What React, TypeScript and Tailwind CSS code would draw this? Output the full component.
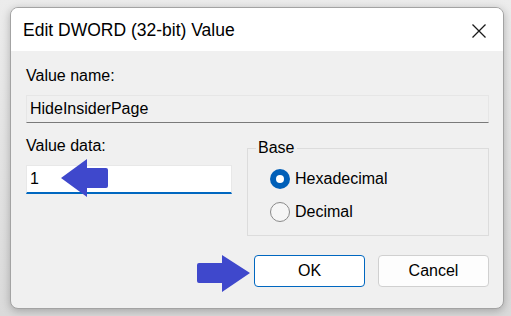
import React from "react";

function LeftArrow() {
  return (
    <svg width="50" height="40" viewBox="0 0 50 40" className="absolute left-[60px] top-[158px]">
      <path d="M1 20 L27 1 L27 10 L46 10 Q48 10 48 12 L48 28 Q48 30 46 30 L27 30 L27 39 Z" fill="#3f48cc" />
    </svg>
  );
}

function RightArrow() {
  return (
    <svg width="56" height="40" viewBox="0 0 56 40" className="absolute left-[196px] top-[254px]">
      <path d="M54 19 L26 1 L26 9 L3 9 Q1 9 1 11 L1 27 Q1 29 3 29 L26 29 L26 38 Z" fill="#3f48cc" />
    </svg>
  );
}

function Radio({ checked, label }: { checked?: boolean; label: string }) {
  return (
    <div className="flex items-center gap-[5px] h-[24px]">
      {checked ? (
        <span className="w-[20px] h-[20px] rounded-full bg-[#005fb8] flex items-center justify-center">
          <span className="w-[8px] h-[8px] rounded-full bg-white" />
        </span>
      ) : (
        <span className="w-[20px] h-[20px] rounded-full border border-[#8a8a8a] bg-[#f6f6f6]" />
      )}
      <span>{label}</span>
    </div>
  );
}

export default function App() {
  return (
    <div className="relative w-[511px] h-[316px] bg-gradient-to-b from-[#ececec] to-[#dadada] pl-[10px] pt-[7px] font-['Segoe_UI','Liberation_Sans',Arial,sans-serif] text-[16px] text-black overflow-hidden">
      <div className="w-[494px] h-[302px] rounded-[8px] border border-[#a3a3a3] bg-[#f0f0f0] overflow-hidden shadow-[0_2px_8px_rgba(0,0,0,0.25)] flex flex-col">
        <div className="h-[43px] bg-white flex items-center justify-between pl-[12px] pr-[16px] pt-[2px] shrink-0">
          <span className="text-[17.5px] leading-none">Edit DWORD (32-bit) Value</span>
          <svg width="16" height="16" viewBox="0 0 16 16">
            <path d="M1.5 1.5 L14.5 14.5 M14.5 1.5 L1.5 14.5" stroke="#1a1a1a" strokeWidth="1.3" />
          </svg>
        </div>
        <div className="pl-[15px] pr-[14px] pt-[15px] flex flex-col">
          <div className="leading-[20px]">Value name:</div>
          <div className="mt-[9px] h-[28px] border border-[#e6e6e6] border-b-[#7a7a7a] bg-[#f0f0f0] pl-[3px] flex items-center">
            HideInsiderPage
          </div>
          <div className="flex mt-[13px]">
            <div className="w-[207px] flex flex-col">
              <div className="leading-[20px]">Value data:</div>
              <div className="mt-[9px] h-[29px] bg-white border border-[#e8e8e8] border-b-2 border-b-[#0067c0] pl-[3px] flex items-center">
                1
              </div>
            </div>
            <fieldset className="ml-[15px] mt-[5px] w-[243px] h-[95px] border border-[#dcdcdc] pl-[22px] pt-[2px]">
              <legend className="ml-[-14px] px-[2px] leading-[14px]">Base</legend>
              <div className="flex flex-col gap-[9px] mt-[10px]">
                <Radio checked label="Hexadecimal" />
                <Radio label="Decimal" />
              </div>
            </fieldset>
          </div>
          <div className="flex justify-end gap-[13px] mt-[19px]">
            <button className="w-[111px] h-[32px] rounded-[4px] bg-white border border-[#0067c0] text-[16px]">OK</button>
            <button className="w-[111px] h-[32px] rounded-[4px] bg-[#fdfdfd] border border-[#d0d0d0] text-[16px]">Cancel</button>
          </div>
        </div>
      </div>
      <LeftArrow />
      <RightArrow />
    </div>
  );
}
